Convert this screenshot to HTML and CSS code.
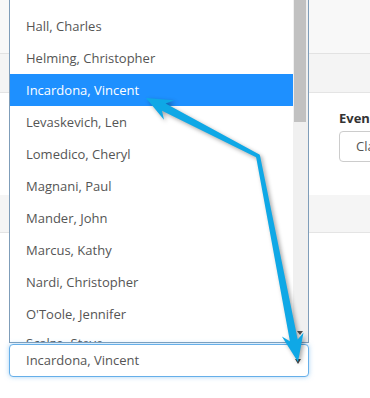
FILE: index.html
```html
<!DOCTYPE html>
<html lang="en">
<head>
  <meta charset="UTF-8" />
  <title>Event roster</title>
  <link rel="stylesheet" href="styles.css">
</head>
<body>
  <!-- page behind the open dropdown -->
  <div class="topbar"></div>
  <div class="subbar"></div>
  <div class="panel">
    <label class="field-label">Event Type</label>
    <div class="field-input">Class</div>
  </div>
  <div class="band"></div>
  <div class="rest"></div>

  <!-- open select popup -->
  <div class="popup">
    <ul class="options">
      <li>Hall, Charles</li>
      <li>Helming, Christopher</li>
      <li class="selected">Incardona, Vincent</li>
      <li>Levaskevich, Len</li>
      <li>Lomedico, Cheryl</li>
      <li>Magnani, Paul</li>
      <li>Mander, John</li>
      <li>Marcus, Kathy</li>
      <li>Nardi, Christopher</li>
      <li>O'Toole, Jennifer</li>
      <li class="partial">Scalzo, Steve</li>
    </ul>
    <div class="scrollbar">
      <div class="thumb"></div>
      <div class="down"></div>
    </div>
  </div>

  <div class="select">
    <span>Incardona, Vincent</span>
    <span class="caret"></span>
  </div>

  <!-- annotation arrows -->
  <svg class="arrows" width="370" height="398" viewBox="0 0 370 398">
    <polygon points="258.9,154.2 165.6,103.6 174.2,100.2 146,98 164,119.8 162,110.8 257.1,157.8" />
    <polygon points="260,155.6 297.7,339.6 303.5,332.4 298,362 281.9,336.6 289.9,341.2 256,156.4" />
    <circle cx="258" cy="156" r="2" />
  </svg>
</body>
</html>
```

FILE: styles.css
```css
body {
  margin: 0;
  width: 370px;
  height: 398px;
  overflow: hidden;
  position: relative;
  background-color: #fff;
  font-family: 'Open Sans', sans-serif;
  color: #555;
}

/* Page behind */
.topbar {
  height: 53px;
  background-color: #f8f8f8;
  border-bottom: 1px solid #e2e2e2;
}

.subbar {
  height: 38px;
  background-color: #f4f4f4;
  border-bottom: 1px solid #e4e4e4;
}

.panel {
  height: 86px;
  padding: 16px 0 0 339px;
  background-color: #fff;
  white-space: nowrap;
  overflow: hidden;
}

.field-label {
  display: block;
  font-size: 13px;
  font-weight: 700;
  line-height: 18px;
  color: #333;
}

.field-input {
  margin-top: 4px;
  height: 29px;
  width: 120px;
  border: 1px solid #ccc;
  border-radius: 4px;
  padding-left: 16px;
  font-size: 13px;
  line-height: 29px;
}

.band {
  height: 37px;
  background-color: #f5f5f5;
  border-bottom: 1px solid #e4e4e4;
}

/* Dropdown popup */
.popup {
  position: absolute;
  top: 0;
  left: 9px;
  width: 298px;
  height: 342px;
  border: 1px solid #7f9db9;
  border-top: none;
  background-color: #fff;
  display: flex;
  overflow: hidden;
}

.options {
  list-style: none;
  margin: 0;
  padding: 10px 0 0;
  width: 283px;
}

.options li {
  height: 32px;
  line-height: 32px;
  padding-left: 16px;
  font-size: 13px;
  white-space: nowrap;
}

.options li.partial {
  height: 12px;
  line-height: 26px;
  overflow: hidden;
}

.options li.selected {
  background-color: #1e90ff;
  color: #fff;
}

.scrollbar {
  position: relative;
  width: 15px;
  background-color: #f0f0f0;
}

.thumb {
  margin-left: 1px;
  width: 12px;
  height: 122px;
  background-color: #c1c1c1;
}

.down {
  position: absolute;
  left: 4px;
  bottom: 7px;
  border-left: 3.5px solid transparent;
  border-right: 3.5px solid transparent;
  border-top: 4px solid #505050;
}

/* Closed select */
.select {
  position: absolute;
  top: 344px;
  left: 9px;
  width: 282px;
  height: 31px;
  padding-left: 16px;
  border: 1px solid #66afe9;
  border-radius: 4px;
  box-shadow: 0 0 5px rgba(102, 175, 233, 0.55);
  background-color: #fff;
  font-size: 13px;
  line-height: 31px;
}

.caret {
  position: absolute;
  right: 7px;
  top: 14px;
  border-left: 3.5px solid transparent;
  border-right: 3.5px solid transparent;
  border-top: 5px solid #444;
}

/* Annotation */
.arrows {
  position: absolute;
  top: 0;
  left: 0;
  pointer-events: none;
  fill: #0fa8e6;
  filter: drop-shadow(2px 2px 2px rgba(0, 0, 0, 0.35));
}
```
